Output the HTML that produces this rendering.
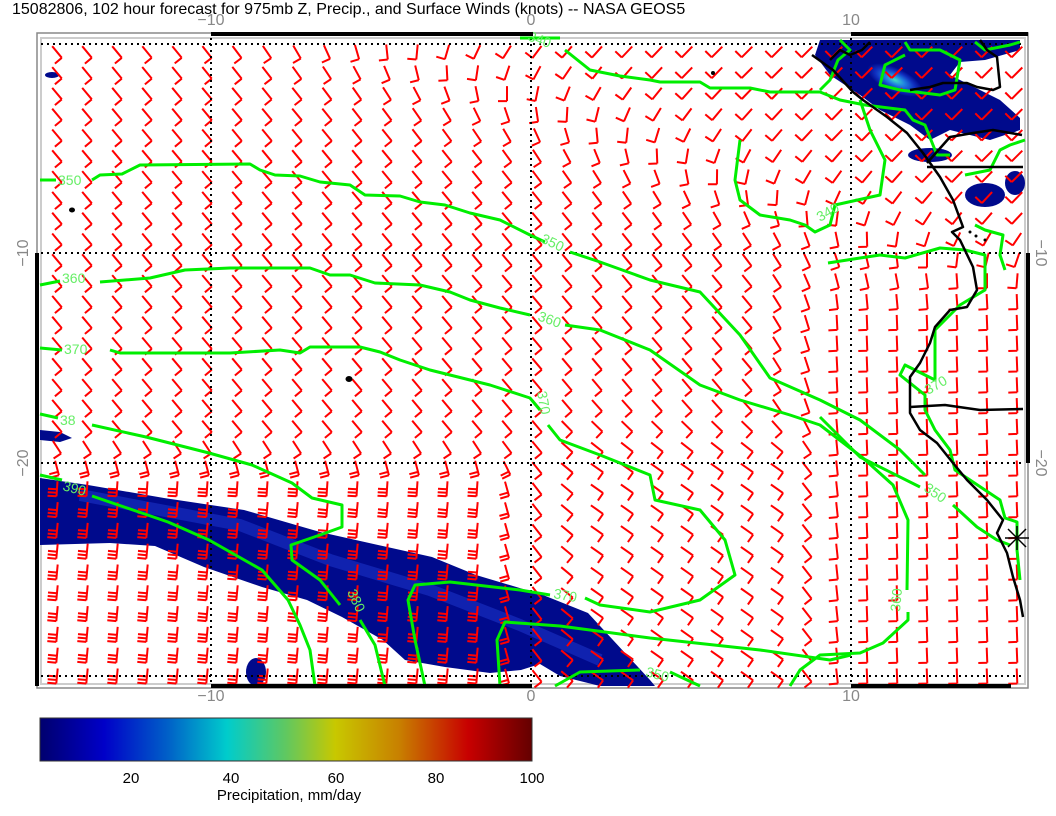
<!DOCTYPE html>
<html><head><meta charset="utf-8">
<style>
html,body{margin:0;padding:0;background:#fff;}
body{width:1056px;height:816px;overflow:hidden;position:relative;font-family:"Liberation Sans",sans-serif;}
svg{position:absolute;left:0;top:0;}
</style></head>
<body>
<svg id="s" width="1056" height="816" viewBox="0 0 1056 816" xmlns="http://www.w3.org/2000/svg">
<defs>
<linearGradient id="jet" x1="0" x2="1" y1="0" y2="0">
<stop offset="0" stop-color="#00006e"/>
<stop offset="0.13" stop-color="#0000c8"/>
<stop offset="0.26" stop-color="#0060c8"/>
<stop offset="0.38" stop-color="#00cccc"/>
<stop offset="0.50" stop-color="#60c860"/>
<stop offset="0.60" stop-color="#c8c800"/>
<stop offset="0.73" stop-color="#c88000"/>
<stop offset="0.87" stop-color="#c80000"/>
<stop offset="1" stop-color="#640000"/>
</linearGradient>
<radialGradient id="hot" cx="0.5" cy="0.5" r="0.5">
<stop offset="0" stop-color="#40e0c0"/>
<stop offset="0.35" stop-color="#2080e0"/>
<stop offset="0.7" stop-color="#1030c0"/>
<stop offset="1" stop-color="#000a8c"/>
</radialGradient>
</defs>
<text x="12" y="14" font-size="16" fill="#000">15082806, 102 hour forecast for 975mb Z, Precip., and Surface Winds (knots) -- NASA GEOS5</text>
<rect x="37" y="33" width="991" height="655" fill="none" stroke="#888" stroke-width="1.5"/>
<rect x="41" y="38" width="984" height="646" fill="none" stroke="#ccc" stroke-width="2"/>
<g fill="#000a8c">
<polygon points="40,478 88,485 164,498 244,510 320,532 432,557 476,575 543,595 588,613 650,680 655,686 600,686 560,676 540,664 521,670 490,673 445,667 405,660 383,640 342,617 307,600 262,587 204,567 155,546 110,543 40,545"/>
<polygon points="40,430 60,432 72,438 60,442 40,440"/>
<ellipse cx="52" cy="75" rx="7" ry="3"/>
<ellipse cx="256" cy="672" rx="10" ry="14"/>
<polygon points="820,40 1020,40 1020,50 985,60 960,62 950,75 1000,100 1020,118 1020,130 990,140 970,135 950,130 930,140 910,125 880,110 860,95 830,75 815,55"/>
<ellipse cx="985" cy="195" rx="20" ry="12"/>
<ellipse cx="1015" cy="183" rx="10" ry="12"/>
<ellipse cx="1010" cy="125" rx="10" ry="8"/>
<ellipse cx="930" cy="155" rx="22" ry="7"/>
</g>
<ellipse cx="895" cy="80" rx="30" ry="12" fill="url(#hot)" transform="rotate(25 895 80)"/>
<path d="M80,495 L240,525 L330,560 L430,590 L520,625 L600,660" stroke="#1428b8" stroke-width="12" fill="none" opacity="0.8"/>
<g id="barbs" stroke="#ff0000" stroke-width="2" fill="none" stroke-linecap="butt"></g>
<g stroke="#000" stroke-width="2" stroke-dasharray="2,4" fill="none">
<line x1="41" y1="44" x2="1025" y2="44"/>
<line x1="41" y1="676" x2="1025" y2="676"/>
<line x1="41" y1="253" x2="1025" y2="253"/>
<line x1="41" y1="463" x2="1025" y2="463"/>
<line x1="211" y1="38" x2="211" y2="684"/>
<line x1="531" y1="38" x2="531" y2="684"/>
<line x1="851" y1="38" x2="851" y2="684"/>
</g>
<g stroke="#00ee00" stroke-width="3" fill="none" stroke-linejoin="round">
<polyline points="40,180 56,180"/>
<polyline points="92,180 100,175 122,174 140,165 250,164 260,170 275,175 300,176 320,182 350,185 365,195 400,196 420,202 445,205 470,213 500,220 530,235 545,242"/>
<polyline points="570,252 600,262 650,280 700,292 740,335 770,378 820,400 860,420 900,450 925,475"/>
<polyline points="40,285 60,281"/>
<polyline points="100,282 150,278 185,270 230,268 262,268 310,268 330,275 350,275 375,283 420,285 450,292 470,300 500,308 530,315"/>
<polyline points="565,325 600,330 650,350 700,385 740,400 790,415 820,425 863,458 893,485 908,520 907,590"/>
<polyline points="908,612 908,620 883,643 860,653 820,655 800,670 790,686"/>
<polyline points="820,417 860,457 920,487"/>
<polyline points="953,505 977,527 997,540 1010,545"/>
<polyline points="40,348 62,350"/>
<polyline points="110,350 120,353 230,353 280,350 300,353 310,347 360,347 380,352 400,360 430,370 470,380 490,385 530,398 540,410"/>
<polyline points="548,425 560,440 600,455 650,475 655,500 700,510 725,540 735,575 700,600 650,612 600,605 585,598"/>
<polyline points="550,595 520,590 450,582 415,585 408,600 415,640 425,686"/>
<polyline points="40,414 58,418"/>
<polyline points="92,425 146,437 209,453 252,465 292,483 312,498 342,505 342,527 320,535 291,545 292,560 320,580 340,605"/>
<polyline points="360,620 375,645 385,686"/>
<polyline points="40,475 62,480"/>
<polyline points="92,496 168,522 209,540 262,570 288,600 300,625 310,650 315,686"/>
<polyline points="500,686 497,640 505,622 560,626 650,638 760,650 830,660 851,655"/>
<polyline points="555,686 580,672 640,670"/>
<polyline points="670,672 700,686"/>
<polyline points="520,38 560,38"/>
<polyline points="565,50 590,70 620,76 650,80 660,82 700,82 710,88 750,88 770,92 800,92 820,92 840,100 865,105 905,110 913,120 925,125 937,155 950,155"/>
<polyline points="740,140 735,180 740,200 760,215 790,220 805,225 815,232 830,225 835,205 880,195 885,160 870,130 860,100"/>
<polyline points="820,90 830,80 838,60 850,50 840,40"/>
<polyline points="905,42 910,50 940,50 960,60 955,90 940,95 900,90 880,85 885,65 905,55"/>
<polyline points="975,42 985,50 1010,45 1020,42"/>
<polyline points="965,175 990,170 1000,150 1010,145 1025,140"/>
<polyline points="828,263 860,258 880,255 905,258 940,248 965,250 985,255 985,290 960,305 935,330 935,380 905,365 900,375 925,395 925,410 935,430 950,450 955,470 985,490 1000,500 1005,518 1017,522 1017,550 1020,580"/>
<polyline points="975,225 985,230 1003,235 1000,255 1005,270"/>
</g>
<g fill="#66ee66" font-size="14">
<text x="58" y="185">350</text>
<text x="62" y="283">360</text>
<text x="64" y="354">370</text>
<text x="60" y="425">38</text>
<text x="62" y="490" transform="rotate(15 62 490)">390</text>
<text x="540" y="242" transform="rotate(25 540 242)">350</text>
<text x="537" y="320" transform="rotate(20 537 320)">360</text>
<text x="537" y="392" transform="rotate(80 537 392)">370</text>
<text x="553" y="598" transform="rotate(10 553 598)">370</text>
<text x="347" y="592" transform="rotate(65 347 592)">380</text>
<text x="645" y="676" transform="rotate(15 645 676)">350</text>
<text x="923" y="490" transform="rotate(35 923 490)">350</text>
<text x="900" y="612" transform="rotate(-85 900 612)">360</text>
<text x="820" y="222" transform="rotate(-30 820 222)">340</text>
<text x="527" y="40" transform="rotate(20 527 40)">340</text>
<text x="928" y="395" transform="rotate(-30 928 395)">370</text>
</g>
<g stroke="#000" stroke-width="2.5" fill="none" stroke-linejoin="round">
<polyline points="812,55 833,70 853,92 863,100 887,117 907,133 923,153 940,177 953,200 963,227 952,232 960,240 973,267 977,290 967,307 950,310 935,327 930,343 920,363 910,377 910,413 920,430 937,443 953,463 967,480 987,500 1003,520 997,533 1007,553 1013,577 1020,600 1023,617"/>
<polyline points="910,407 945,405 980,410 1023,409"/>
<polyline points="927,167 1023,167"/>
<polyline points="910,90 930,87 943,83 967,83 977,87 993,90 1000,87 997,57 987,50 980,40"/>
<polyline points="927,163 950,137 973,133 993,130 1022,135"/>
<polyline points="830,60 840,50 850,55 862,50 870,42"/>
</g>
<g stroke="#000" stroke-width="1.5">
<line x1="1005" y1="538" x2="1029" y2="538"/><line x1="1017" y1="526" x2="1017" y2="550"/>
<line x1="1008" y1="529" x2="1026" y2="547"/><line x1="1026" y1="529" x2="1008" y2="547"/>
</g>
<g fill="#000"><ellipse cx="72" cy="210" rx="3" ry="2.5"/><ellipse cx="349" cy="379" rx="3.5" ry="3"/><circle cx="713" cy="73" r="2"/><circle cx="970" cy="232" r="1.5"/><circle cx="976" cy="236" r="1.5"/><circle cx="985" cy="240" r="1.5"/></g>
<g fill="#000">
<rect x="211" y="32" width="322" height="4"/>
<rect x="851" y="32" width="177" height="4"/>
<rect x="211" y="684" width="321" height="4"/>
<rect x="851" y="684" width="160" height="4"/>
<rect x="35" y="253" width="4" height="433"/>
<rect x="1026" y="253" width="4" height="210"/>
</g>
<g fill="#888" font-size="16" text-anchor="middle">
<text x="211" y="25">−10</text><text x="531" y="25">0</text><text x="851" y="25">10</text>
<text x="211" y="701">−10</text><text x="531" y="701">0</text><text x="851" y="701">10</text>
<text transform="translate(28 253) rotate(-90)">−10</text>
<text transform="translate(28 463) rotate(-90)">−20</text>
<text transform="translate(1036 253) rotate(90)">−10</text>
<text transform="translate(1036 463) rotate(90)">−20</text>
</g>
<rect x="40" y="718" width="492" height="43" fill="url(#jet)" stroke="#333" stroke-width="1"/>
<g fill="#000" font-size="15" text-anchor="middle">
<text x="131" y="783">20</text><text x="231" y="783">40</text><text x="336" y="783">60</text><text x="436" y="783">80</text><text x="532" y="783">100</text>
<text x="289" y="800">Precipitation, mm/day</text>
</g>
</svg>
<script>
(function(){
var g=document.getElementById('barbs'),out='';
function sig(v){return 1/(1+Math.exp(-v));}
for(var r=0;r<31;r++){
 for(var c=0;c<33;c++){
  var x=57+c*30, y=52+r*20.8;
  var x0=380+2.5*(y-40);
  var th=-40+85*sig((x-x0)/55);
  var s=Math.min(1,Math.max(0,(y-230)/80))*Math.min(1,Math.max(0,(x-760)/80));
  th=th*(1-s)+(-2)*s;
  var m=Math.min(1,Math.max(0,(y-400)/60))*Math.min(1,Math.max(0,(x-540)/40))*Math.min(1,Math.max(0,(840-x)/60));
  th=th*(1-m)+(-55)*m;
  var w=Math.min(1,Math.max(0,(y-440)/50))*Math.min(1,Math.max(0,(540-x)/60));
  th=th*(1-w)+5*w;
  var n=w>0.6?3:(w>0.3?2:1);
  var a=th*Math.PI/180, L=15, T=9;
  var ux=Math.sin(a), uy=-Math.cos(a);
  var bx=x-ux*L/2, by=y-uy*L/2, tx=x+ux*L/2, ty=y+uy*L/2;
  var kx=uy, ky=-ux;
  out+='<path d="M'+tx.toFixed(1)+','+ty.toFixed(1)+'L'+bx.toFixed(1)+','+by.toFixed(1);
  for(var k=0;k<n;k++){
   var px=bx+ux*3.5*k, py=by+uy*3.5*k;
   out+='M'+px.toFixed(1)+','+py.toFixed(1)+'l'+(kx*T).toFixed(1)+','+(ky*T).toFixed(1);
  }
  out+='"/>';
 }
}
g.innerHTML=out;
})();
</script>
</body></html>
